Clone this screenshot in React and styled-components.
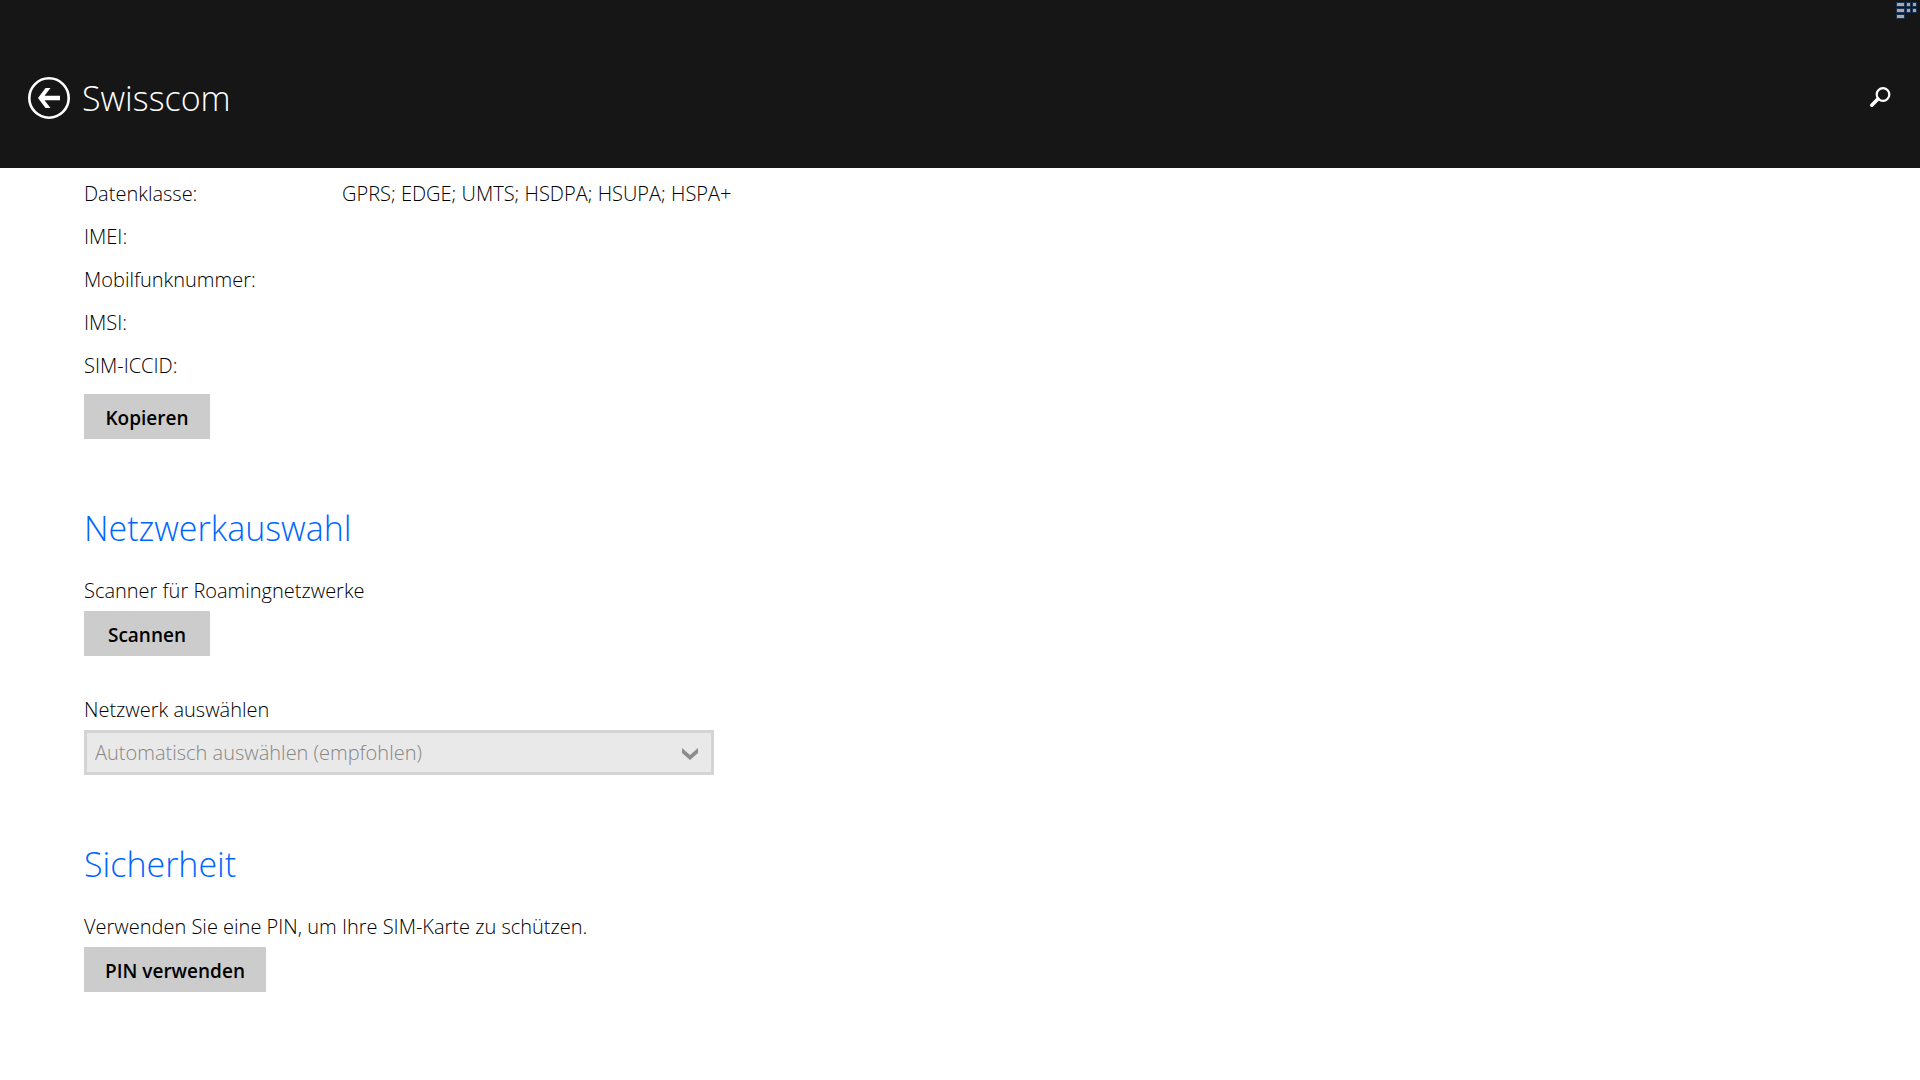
import React from "react";
import styled, { createGlobalStyle } from "styled-components";

const GlobalStyle = createGlobalStyle`
  * { box-sizing: border-box; }
  body {
    margin: 0;
    background: #fff;
    color: #000;
    font-family: "Open Sans", "Noto Sans", sans-serif;
    font-size: 20px;
    font-weight: 300;
    line-height: 28px;
  }
`;

const Header = styled.header`
  position: relative;
  display: flex;
  align-items: center;
  gap: 12px;
  height: 168px;
  padding: 28px 28px 0;
  background: #161616;
  color: #fff;
`;

const IconButton = styled.button`
  display: flex;
  padding: 0;
  border: 0;
  background: none;
  color: inherit;
`;

const Title = styled.h1`
  flex: 1;
  margin: 0;
  font-size: 34px;
  font-weight: 300;
  line-height: 48px;
`;

const CornerMark = styled.svg`
  position: absolute;
  top: 1px;
  right: 2px;
`;

const Main = styled.main`
  padding: 4px 84px 88px;
`;

const Properties = styled.dl`
  display: grid;
  grid-template-columns: 258px 1fr;
  grid-auto-rows: 43px;
  align-items: center;
  margin: 0 0 7px;
`;

const Term = styled.dt``;

const Value = styled.dd`
  margin: 0;
`;

const Section = styled.section`
  margin-top: 65px;
`;

const SectionTitle = styled.h2`
  margin: 0 0 25px;
  color: #0066ff;
  font-size: 34px;
  font-weight: 300;
  line-height: 48px;
`;

const Field = styled.div`
  display: flex;
  flex-direction: column;
  align-items: flex-start;
  gap: 6px;
  & + & {
    margin-top: 40px;
  }
`;

const Text = styled.p`
  margin: 0;
`;

const Button = styled.button`
  min-width: 126px;
  height: 45px;
  padding: 2px 21px 0;
  border: 0;
  background: #ccc;
  color: #000;
  font: inherit;
  font-size: 19px;
  font-weight: 600;
`;

const SelectBox = styled.div`
  display: grid;
  align-items: center;
  width: 100%;
  max-width: 630px;
  & > * {
    grid-area: 1 / 1;
  }
`;

const Select = styled.select`
  appearance: none;
  width: 100%;
  height: 45px;
  padding: 0 48px 0 8px;
  border: 3px solid #d4d4d4;
  border-radius: 0;
  background: #e9e9e9;
  color: #868686;
  font: inherit;
  font-weight: 350;
  opacity: 1;
`;

const Chevron = styled.svg`
  justify-self: end;
  margin: 3px 16px 0 0;
  pointer-events: none;
`;

const properties = [
  ["Datenklasse:", "GPRS; EDGE; UMTS; HSDPA; HSUPA; HSPA+"],
  ["IMEI:", ""],
  ["Mobilfunknummer:", ""],
  ["IMSI:", ""],
  ["SIM-ICCID:", ""],
];

const markCells = [
  [0, 2, 6], [10, 2, 2], [16, 2, 2],
  [0, 8, 6], [10, 8, 2], [16, 8, 2],
  [0, 14, 6],
];

export default function App() {
  return (
    <>
      <GlobalStyle />
      <Header>
        <IconButton type="button" aria-label="Zurück">
          <svg width="42" height="42" viewBox="0 0 42 42" fill="none">
            <circle cx="21" cy="21" r="19.7" stroke="currentColor" strokeWidth="2.6" />
            <path
              d="M10 21 L17.5 11 H22.5 L16.5 18.8 H32 V23.2 H16.5 L22.5 31 H17.5 Z"
              fill="currentColor"
            />
          </svg>
        </IconButton>
        <Title>Swisscom</Title>
        <IconButton type="button" aria-label="Suchen">
          <svg width="23" height="22" viewBox="0 0 23 22" fill="none" stroke="currentColor">
            <circle cx="14" cy="7.5" r="6.3" strokeWidth="2.2" />
            <path d="M8.9 12.1 L2.8 18.2" strokeWidth="3.6" strokeLinecap="round" />
          </svg>
        </IconButton>
        <CornerMark width="22" height="19" viewBox="0 0 22 19" aria-hidden="true">
          {markCells.map(([x, y, w]) => (
            <React.Fragment key={`${x}-${y}`}>
              <rect x={x} y={y - 1} width={w + 3} height="5" fill="#1c3350" />
              <rect x={x + 1} y={y} width={w + 1} height="3" fill="#a8a8a8" />
            </React.Fragment>
          ))}
        </CornerMark>
      </Header>
      <Main>
        <Properties>
          {properties.map(([term, value]) => (
            <React.Fragment key={term}>
              <Term>{term}</Term>
              <Value>{value}</Value>
            </React.Fragment>
          ))}
        </Properties>
        <Button type="button">Kopieren</Button>

        <Section>
          <SectionTitle>Netzwerkauswahl</SectionTitle>
          <Field>
            <Text>Scanner für Roamingnetzwerke</Text>
            <Button type="button">Scannen</Button>
          </Field>
          <Field>
            <label htmlFor="network">Netzwerk auswählen</label>
            <SelectBox>
              <Select id="network" disabled defaultValue="auto">
                <option value="auto">Automatisch auswählen (empfohlen)</option>
              </Select>
              <Chevron width="16" height="12" viewBox="0 0 16 12" aria-hidden="true">
                <path d="M0 0 L8 7 L16 0 V5 L8 12 L0 5 Z" fill="#8c8c8c" />
              </Chevron>
            </SelectBox>
          </Field>
        </Section>

        <Section>
          <SectionTitle>Sicherheit</SectionTitle>
          <Field>
            <Text>Verwenden Sie eine PIN, um Ihre SIM-Karte zu schützen.</Text>
            <Button type="button">PIN verwenden</Button>
          </Field>
        </Section>
      </Main>
    </>
  );
}
